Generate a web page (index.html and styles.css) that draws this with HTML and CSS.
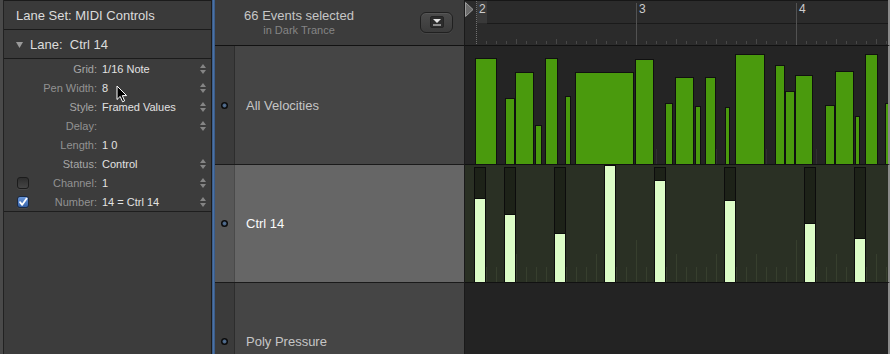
FILE: index.html
```html
<!DOCTYPE html>
<html>
<head>
<meta charset="utf-8">
<link rel="stylesheet" href="styles.css">
</head>
<body>
<div class="app">
  <aside class="inspector">
    <div class="insp-head first">Lane Set: MIDI Controls</div>
    <div class="insp-head"><svg class="disclose" width="7" height="6" viewBox="0 0 7 6"><polygon points="0,0 7,0 3.5,6" fill="#9a9a9a"/></svg>Lane:&nbsp; Ctrl 14</div>
    <div class="params">
      <div class="prow"><span></span><span class="lbl hi">Grid:</span><span class="val">1/16 Note</span><svg class="step" width="6" height="10" viewBox="0 0 6 10"><polygon points="0,4 3,0 6,4"/><polygon points="0,6 3,10 6,6"/></svg></div>
      <div class="prow"><span></span><span class="lbl">Pen Width:</span><span class="val">8</span><svg class="step" width="6" height="10" viewBox="0 0 6 10"><polygon points="0,4 3,0 6,4"/><polygon points="0,6 3,10 6,6"/></svg></div>
      <div class="prow"><span></span><span class="lbl hi">Style:</span><span class="val">Framed Values</span><svg class="step" width="6" height="10" viewBox="0 0 6 10"><polygon points="0,4 3,0 6,4"/><polygon points="0,6 3,10 6,6"/></svg></div>
      <div class="prow"><span></span><span class="lbl">Delay:</span><span class="val"></span><svg class="step" width="6" height="10" viewBox="0 0 6 10"><polygon points="0,4 3,0 6,4"/><polygon points="0,6 3,10 6,6"/></svg></div>
      <div class="prow"><span></span><span class="lbl">Length:</span><span class="val">1 0</span><span></span></div>
      <div class="prow"><span></span><span class="lbl hi">Status:</span><span class="val">Control</span><svg class="step" width="6" height="10" viewBox="0 0 6 10"><polygon points="0,4 3,0 6,4"/><polygon points="0,6 3,10 6,6"/></svg></div>
      <div class="prow"><span class="cb"></span><span class="lbl">Channel:</span><span class="val">1</span><svg class="step" width="6" height="10" viewBox="0 0 6 10"><polygon points="0,4 3,0 6,4"/><polygon points="0,6 3,10 6,6"/></svg></div>
      <div class="prow"><span class="cb on"><svg width="10" height="10" viewBox="0 0 10 10"><path d="M2 5.2 L4.2 7.8 L8.6 1.6" fill="none" stroke="#fff" stroke-width="1.8" stroke-linecap="round" stroke-linejoin="round"/></svg></span><span class="lbl">Number:</span><span class="val">14 = Ctrl 14</span><svg class="step" width="6" height="10" viewBox="0 0 6 10"><polygon points="0,4 3,0 6,4"/><polygon points="0,6 3,10 6,6"/></svg></div>
    </div>
    <svg class="cursor" width="12" height="18" viewBox="0 0 12 18"><path d="M1 1 L1 14.5 L4.2 11.4 L6.6 16.8 L8.6 15.9 L6.3 10.6 L10.6 10.6 Z" fill="#000" stroke="#fff" stroke-width="1" stroke-linejoin="round"/></svg>
  </aside>
  <div class="splitter"></div>
  <main class="editor">
    <div class="lane-hdr">
      <div class="hdr-text">
        <div class="hdr-title">66 Events selected</div>
        <div class="hdr-sub">in Dark Trance</div>
      </div>
      <div class="btn"><svg width="14" height="12" viewBox="0 0 14 12"><rect x="0.5" y="0.5" width="13" height="11" rx="1.5" fill="#2c2c2c" stroke="#242424"/><polygon points="3,3 11,3 7,7" fill="#e6e6e6"/><rect x="3" y="8" width="8" height="2" fill="#8d8d8d"/></svg></div>
    </div>
    <div class="ruler">
      <svg width="423" height="45" viewBox="0 0 423 45">
        <rect x="12" y="1" width="10" height="22" fill="#393939"/>
        <path d="M0 0.5H423" stroke="#161616"/>
        <path d="M22 23.5H423" stroke="#1a1a1a"/>
        <path d="M11.5 1V45" stroke="#707070" stroke-dasharray="1 1"/>
        <path d="M171.5 3V45M331.5 3V45" stroke="#525252"/>
        <path d="M21.5 41v3M31.5 41v3M41.5 41v3M61.5 41v3M71.5 41v3M81.5 41v3M101.5 41v3M111.5 41v3M121.5 41v3M141.5 41v3M151.5 41v3M161.5 41v3M181.5 41v3M191.5 41v3M201.5 41v3M221.5 41v3M231.5 41v3M241.5 41v3M261.5 41v3M271.5 41v3M281.5 41v3M301.5 41v3M311.5 41v3M321.5 41v3M341.5 41v3M351.5 41v3M361.5 41v3M381.5 41v3M391.5 41v3M401.5 41v3M421.5 41v3M51.5 39v5M91.5 39v5M131.5 39v5M211.5 39v5M251.5 39v5M291.5 39v5M371.5 39v5M411.5 39v5" stroke="#474747"/>
        <text x="14" y="13">2</text>
        <text x="174" y="13">3</text>
        <text x="334" y="13">4</text>
        <polygon points="0.5,2.5 8,9.5 0.5,16.5" fill="#6c6c6c" stroke="#9c9c9c"/>
      </svg>
    </div>

    <div class="lname"><div class="sub"><span class="dot"></span></div><div class="nm">All Velocities</div></div>
    <div class="ldata vel">
      <svg width="423" height="118" viewBox="0 0 423 118">
        <path d="M11.5 103v15m10-15v15m10-15v15m10-15v15m10-15v15m10-15v15m10-15v15m10-15v15m10-15v15m10-15v15m10-15v15m10-15v15m10-15v15m10-15v15m10-15v15m10-15v15m10-15v15m10-15v15m10-15v15m10-15v15m10-15v15m10-15v15m10-15v15m10-15v15m10-15v15m10-15v15m10-15v15m10-15v15m10-15v15m10-15v15m10-15v15m10-15v15m10-15v15m10-15v15m10-15v15m10-15v15m10-15v15m10-15v15m10-15v15m10-15v15m10-15v15" stroke="#303030"/>
        <g fill="#4a9a0d" stroke="#101010">
          <rect x="10.5" y="12.5" width="21" height="106"/>
          <rect x="40.5" y="52.5" width="9" height="66"/>
          <rect x="50.5" y="26.5" width="18" height="92"/>
          <rect x="70.5" y="79.5" width="6" height="39"/>
          <rect x="80.5" y="12.5" width="12" height="106"/>
          <rect x="100.5" y="50.5" width="5" height="68"/>
          <rect x="110.5" y="26.5" width="58" height="92"/>
          <rect x="170.5" y="13.5" width="18" height="105"/>
          <rect x="200.5" y="57.5" width="7" height="61"/>
          <rect x="210.5" y="31.5" width="18" height="87"/>
          <rect x="230.5" y="60.5" width="5" height="58"/>
          <rect x="240.5" y="31.5" width="10" height="87"/>
          <rect x="260.5" y="61.5" width="4" height="57"/>
          <rect x="270.5" y="8.5" width="29" height="110"/>
          <rect x="310.5" y="19.5" width="9" height="99"/>
          <rect x="320.5" y="45.5" width="9" height="73"/>
          <rect x="330.5" y="29.5" width="17" height="89"/>
          <rect x="360.5" y="59.5" width="9" height="59"/>
          <rect x="370.5" y="25.5" width="18" height="93"/>
          <rect x="390.5" y="70.5" width="4" height="48"/>
          <rect x="400.5" y="8.5" width="12" height="110"/>
          <rect x="420.5" y="57.5" width="6" height="61"/>
        </g>
      </svg>
    </div>

    <div class="lname sel"><div class="sub"><span class="dot"></span></div><div class="nm">Ctrl 14</div></div>
    <div class="ldata ctrl">
      <svg width="423" height="117" viewBox="0 0 423 117">
        <path d="M21.5 102v15M31.5 102v15M41.5 102v15M61.5 102v15M71.5 102v15M81.5 102v15M101.5 102v15M111.5 102v15M121.5 102v15M141.5 102v15M151.5 102v15M161.5 102v15M181.5 102v15M191.5 102v15M201.5 102v15M221.5 102v15M231.5 102v15M241.5 102v15M261.5 102v15M271.5 102v15M281.5 102v15M301.5 102v15M311.5 102v15M321.5 102v15M341.5 102v15M351.5 102v15M361.5 102v15M381.5 102v15M391.5 102v15M401.5 102v15M421.5 102v15M51.5 89v28M91.5 89v28M131.5 89v28M211.5 89v28M251.5 89v28M291.5 89v28M371.5 89v28M411.5 89v28M11.5 75v42M171.5 75v42M331.5 75v42" stroke="#373f2e"/>
        <g stroke="#0c0c0c">
          <rect x="9.5" y="2.5" width="11" height="116" fill="#1d2218"/>
          <rect x="9.5" y="33.5" width="11" height="85" fill="#dcfcc7"/>
          <rect x="39.5" y="2.5" width="11" height="116" fill="#1d2218"/>
          <rect x="39.5" y="49.5" width="11" height="69" fill="#dcfcc7"/>
          <rect x="89.5" y="2.5" width="11" height="116" fill="#1d2218"/>
          <rect x="89.5" y="68.5" width="11" height="50" fill="#dcfcc7"/>
          <rect x="139.5" y="0.5" width="11" height="118" fill="#dcfcc7"/>
          <rect x="189.5" y="2.5" width="11" height="116" fill="#1d2218"/>
          <rect x="189.5" y="15.5" width="11" height="103" fill="#dcfcc7"/>
          <rect x="259.5" y="2.5" width="11" height="116" fill="#1d2218"/>
          <rect x="259.5" y="35.5" width="11" height="83" fill="#dcfcc7"/>
          <rect x="339.5" y="2.5" width="11" height="116" fill="#1d2218"/>
          <rect x="339.5" y="58.5" width="11" height="60" fill="#dcfcc7"/>
          <rect x="389.5" y="2.5" width="11" height="116" fill="#1d2218"/>
          <rect x="389.5" y="73.5" width="11" height="45" fill="#dcfcc7"/>
        </g>
      </svg>
    </div>

    <div class="lname cut"><div class="sub"><span class="dot"></span></div><div class="nm">Poly Pressure</div></div>
    <div class="ldata poly"></div>
  </main>
</div>
</body>
</html>
```

FILE: styles.css
```css
* { box-sizing: border-box; }

html, body {
  margin: 0;
  padding: 0;
}

body {
  width: 890px;
  height: 354px;
  overflow: hidden;
  background: #4a4a4a;
  font-family: "Liberation Sans", Arial, sans-serif;
}

.app {
  display: flex;
  height: 354px;
  padding-left: 3px;
  overflow: hidden;
}

/* ---------- Inspector ---------- */
.inspector {
  position: relative;
  flex: none;
  width: 209px;
  height: 354px;
  background: #3c3c3c;
  border-left: 1px solid #222;
  border-right: 1px solid #1c1c1c;
}

.insp-head {
  display: flex;
  align-items: center;
  height: 29px;
  padding-left: 12px;
  border-bottom: 1px solid #1b1b1b;
  background: #3a3a3a;
  color: #dcdcdc;
  font-size: 13px;
}

.insp-head.first {
  height: 30px;
  border-top: 1px solid #1b1b1b;
}

.disclose {
  margin-right: 7px;
  margin-top: 1px;
}

.params {
  border-bottom: 1px solid #1e1e1e;
}

.prow {
  display: grid;
  grid-template-columns: 12px 68px 1fr 6px;
  align-items: center;
  height: 19px;
  padding: 0 5px 0 13px;
  font-size: 11px;
}

.lbl {
  text-align: right;
  color: #929292;
  white-space: nowrap;
}

.lbl.hi { color: #a6a6a6; }

.val {
  padding-left: 5px;
  color: #e2e2e2;
  white-space: nowrap;
}

.step { fill: #858585; }

.cb {
  width: 12px;
  height: 12px;
  border-radius: 3px;
  border: 1px solid #1c1c1c;
  background: linear-gradient(#2e2e2e, #454545);
  box-shadow: 0 1px 0 rgba(255,255,255,0.06);
  display: flex;
  align-items: center;
  justify-content: center;
}

.cb.on {
  background: linear-gradient(#6a96d8, #3562a8);
  border-color: #1a2a44;
}

.cursor {
  position: absolute;
  left: 112px;
  top: 85px;
}

.splitter {
  flex: none;
  width: 3px;
  height: 354px;
  background: linear-gradient(90deg, #34537c, #4b72a6, #34537c);
}

/* ---------- Editor ---------- */
.editor {
  display: grid;
  grid-template-columns: 250px 425px;
  grid-template-rows: 46px 119px 118px 71px;
  flex: none;
}

.lane-hdr {
  display: flex;
  align-items: center;
  background: #3c3c3c;
  border-bottom: 1px solid #121212;
  border-right: 1px solid #1a1a1a;
}

.hdr-text {
  width: 168px;
  text-align: center;
}

.hdr-title {
  font-size: 13px;
  line-height: 15px;
  color: #c6c6c6;
}

.hdr-sub {
  font-size: 11px;
  line-height: 14px;
  color: #858585;
}

.btn {
  margin-left: auto;
  margin-right: 11px;
  margin-top: -1px;
  width: 33px;
  height: 21px;
  border: 1px solid #202020;
  border-radius: 6px;
  background: linear-gradient(#4b4b4b, #3b3b3b);
  box-shadow: inset 0 1px 0 rgba(255,255,255,0.07), 0 1px 0 rgba(255,255,255,0.05);
  display: flex;
  align-items: center;
  justify-content: center;
}

.ruler {
  background: #2b2b2b;
  border-bottom: 1px solid #111;
  border-right: 2px solid #8c8c8c;
}

.ruler svg { display: block; }

.ruler text {
  font-family: "Liberation Sans", Arial, sans-serif;
  font-size: 12px;
  fill: #cdcdcd;
}

.lname {
  display: flex;
  background: #454545;
  border-bottom: 1px solid #1a1a1a;
  border-right: 1px solid #1a1a1a;
}

.lname .sub {
  flex: none;
  width: 20px;
  background: #3b3b3b;
  border-right: 1px solid #2d2d2d;
  display: flex;
  align-items: center;
  justify-content: center;
}

.lname .nm {
  display: flex;
  align-items: center;
  padding-left: 11px;
  font-size: 13px;
  line-height: 15px;
  color: #c6c6c6;
}

.lname.sel { background: #666; }
.lname.sel .sub { background: #575757; border-right-color: #4a4a4a; }
.lname.sel .nm { color: #fafafa; }

.lname.cut { border-bottom: none; }
.lname.cut .sub { align-items: flex-start; padding-top: 55px; }
.lname.cut .nm { align-items: flex-start; padding-top: 51px; }

.dot {
  width: 7px;
  height: 7px;
  border-radius: 50%;
  background: radial-gradient(circle, #5a7597 0, #46607f 1.6px, #0b0b0b 2.4px);
}

.ldata {
  border-right: 2px solid #8c8c8c;
  overflow: hidden;
}

.ldata svg { display: block; }

.vel {
  background: #242424;
  border-bottom: 1px solid #111;
}

.ctrl {
  background: #2a3024;
  border-bottom: 1px solid #111;
}

.poly {
  background: #232323;
}
```
